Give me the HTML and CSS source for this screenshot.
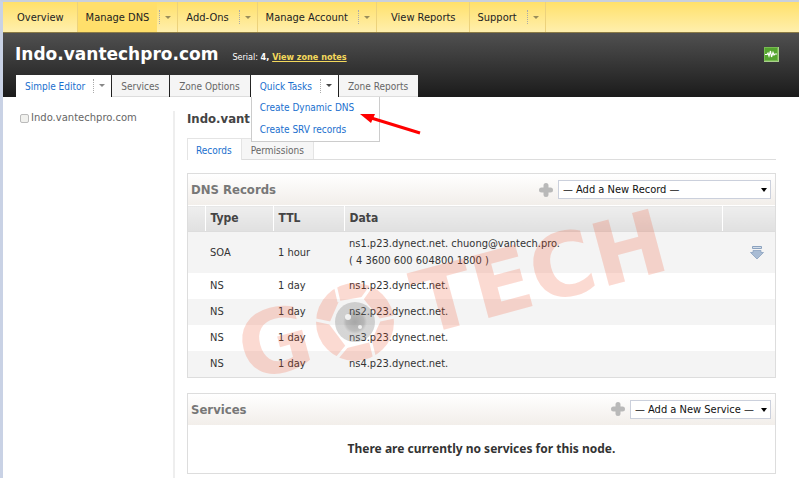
FILE: index.html
```html
<!DOCTYPE html>
<html lang="en">
<head>
	<meta charset="utf-8">
	<meta name="viewport" content="width=device-width">
	<title>Indo.vantechpro.com</title>
	<link rel="stylesheet" href="styles.css">
</head>
<body>

	<nav class="mainnav">
		<div class="navitem single"><a href="#">Overview</a></div>
		<div class="navitem current"><a href="#">Manage DNS</a><button class="more" aria-label="Manage DNS menu"></button></div>
		<div class="navitem"><a href="#">Add-Ons</a><button class="more" aria-label="Add-Ons menu"></button></div>
		<div class="navitem"><a href="#">Manage Account</a><button class="more" aria-label="Manage Account menu"></button></div>
		<div class="navitem single"><a href="#">View Reports</a></div>
		<div class="navitem"><a href="#">Support</a><button class="more" aria-label="Support menu"></button></div>
	</nav>

	<header class="zone">
		<div class="zonetitle">
			<h1>Indo.vantechpro.com</h1>
			<p>Serial: <b>4, <a href="#">View zone notes</a></b></p>
			<svg class="health" width="15" height="15" viewBox="0 0 15 15">
				<rect width="15" height="15" fill="#a9d08c"/>
				<rect x="0.5" y="0.5" width="13" height="13" fill="#55a52f" stroke="#77bb50"/>
				<path d="M1 7.5h2l1-1.5 1 3 1.500-5 1 6 1.500-4.500 1 2.500 1-1h2" fill="none" stroke="#fff" stroke-width="1.200"/>
			</svg>
		</div>
		<div class="zonetabs">
			<div class="zonetab active"><a href="#">Simple Editor</a><button class="more" aria-label="Simple Editor menu"></button></div>
			<div class="zonetab"><a href="#">Services</a></div>
			<div class="zonetab"><a href="#">Zone Options</a></div>
			<div class="zonetab active open">
				<a href="#">Quick Tasks</a><button class="more" aria-label="Quick Tasks menu"></button>
				<div class="taskmenu">
					<a href="#">Create Dynamic DNS</a>
					<a href="#">Create SRV records</a>
					<svg class="pointer" width="64" height="26" viewBox="0 0 64 26">
						<path d="M10 5L62 21" stroke="#f00" stroke-width="3"/>
						<path d="M2 2L17 2L13 11Z" fill="#f00"/>
					</svg>
				</div>
			</div>
			<div class="zonetab"><a href="#">Zone Reports</a></div>
		</div>
	</header>

	<div class="columns">
		<aside class="nodes">
			<label><input type="checkbox">Indo.vantechpro.com</label>
		</aside>

		<main class="node">
			<h2>Indo.vant</h2>
			<div class="nodetabs">
				<a class="nodetab active" href="#">Records</a>
				<a class="nodetab" href="#">Permissions</a>
			</div>

			<section class="panel">
				<div class="panelhead">
					<h3>DNS Records</h3>
					<svg class="plus" width="14" height="14" viewBox="0 0 14 14"><path d="M7 2.500v9M2.500 7h9" stroke="#b9b9b9" stroke-width="5" stroke-linecap="round"/></svg>
					<span class="picker wide"><select aria-label="Add a new record"><option>— Add a New Record —</option></select></span>
				</div>
				<table class="records">
					<thead>
						<tr><th class="mark"></th><th class="type">Type</th><th class="ttl">TTL</th><th>Data</th><th class="action"></th></tr>
					</thead>
					<tbody>
						<tr class="soa">
							<td></td><td>SOA</td><td>1 hour</td>
							<td>ns1.p23.dynect.net. chuong@vantech.pro.<br>( 4 3600 600 604800 1800 )</td>
							<td class="expand">
								<svg width="14" height="15" viewBox="0 0 14 15">
									<path d="M2.500 1.500h9v2h-9z" fill="#d3deea" stroke="#8ba2bf"/>
									<path d="M3 5.500h8v2h2.500L7 14 0.500 7.500H3z" fill="#a9bcd4" stroke="#8ba2bf" stroke-width="0.800"/>
								</svg>
							</td>
						</tr>
						<tr><td></td><td>NS</td><td>1 day</td><td>ns1.p23.dynect.net.</td><td></td></tr>
						<tr><td></td><td>NS</td><td>1 day</td><td>ns2.p23.dynect.net.</td><td></td></tr>
						<tr><td></td><td>NS</td><td>1 day</td><td>ns3.p23.dynect.net.</td><td></td></tr>
						<tr><td></td><td>NS</td><td>1 day</td><td>ns4.p23.dynect.net.</td><td></td></tr>
					</tbody>
				</table>

				<svg class="watermark" width="470" height="200" viewBox="0 0 470 200">
					<defs>
						<mask id="blades">
							<rect x="-50" y="-50" width="100" height="100" fill="#fff"/>
							<path d="M-16 -20L-21 -42M7 -23L20 -41M25 -2L44 -6M15 17L21 42M-8 24L-23 42M-25 1L-44 -3" stroke="#000" stroke-width="3"/>
						</mask>
						<radialGradient id="glass">
							<stop offset="0" stop-color="#333" stop-opacity="0.400"/>
							<stop offset="0.450" stop-color="#444" stop-opacity="0.350"/>
							<stop offset="0.600" stop-color="#777" stop-opacity="0.300"/>
							<stop offset="1" stop-color="#888" stop-opacity="0.350"/>
						</radialGradient>
					</defs>
					<g class="brand" transform="translate(25 172) rotate(-15)">
						<text x="-13" y="1">G</text>
						<text x="168" y="2">TECH</text>
					</g>
					<g transform="translate(120 117)">
						<path class="ring" mask="url(#blades)" fill-rule="evenodd" d="M39 0A39 39 0 1 1 -39 0A39 39 0 1 1 39 0ZM26 -2L7 -25L-16 -21L-26 2L-8 26L16 20Z"/>
						<circle r="20" fill="url(#glass)"/>
						<circle cx="-7" cy="-5" r="3" fill="#fff" opacity="0.800"/>
						<circle cx="5" cy="5" r="2" fill="#fff" opacity="0.800"/>
					</g>
				</svg>
			</section>

			<section class="panel">
				<div class="panelhead">
					<h3>Services</h3>
					<svg class="plus" width="14" height="14" viewBox="0 0 14 14"><path d="M7 2.500v9M2.500 7h9" stroke="#b9b9b9" stroke-width="5" stroke-linecap="round"/></svg>
					<span class="picker"><select aria-label="Add a new service"><option>— Add a New Service —</option></select></span>
				</div>
				<p class="empty">There are currently no services for this node.</p>
			</section>
		</main>
	</div>

</body>
</html>
```
FILE: styles.css
```css
* {
	box-sizing: border-box;
}
html, body {
	margin: 0;
	padding: 0;
}
body {
	min-height: 100vh;
	border-top: 2px solid #c9d0dc;
	border-left: 3px solid #c9d2e5;
	background: #fff;
	color: #333;
	font-family: "DejaVu Sans Condensed", "DejaVu Sans", sans-serif;
	font-stretch: condensed;
	font-size: 11px;
	line-height: 17px;
}
h1, h2, h3, p {
	margin: 0;
}
a {
	color: inherit;
	text-decoration: none;
}

/* Small drop-down arrow beside a tab. */
.more {
	width: 20px;
	padding: 0 0 0 2px;
	border: 0;
	background: none;
	color: #998d5a;
	display: flex;
	align-items: center;
}
.more::before {
	content: "";
	height: 14px;
	margin-right: 5px;
	border-left: 1px dotted #aaa;
}
.more::after {
	content: "";
	border: 3px solid transparent;
	border-top-color: currentColor;
	border-bottom: 0;
}

.mainnav {
	display: flex;
	height: 31px;
	background: linear-gradient(#ffe06a, #ffefad);
	border-bottom: 1px solid #8a7a45;
	color: #222;
}
.navitem {
	display: flex;
	border-right: 1px solid #ecd27c;
}
.navitem a {
	padding: 7px 8px 6px;
}
.navitem.single a {
	padding: 7px 13px 6px 14px;
}
.navitem.current a {
	background: #ffdf6b;
}

.zone {
	display: flex;
	flex-direction: column;
	height: 64px;
	background: linear-gradient(#505050, #1b1b1b);
	color: #fff;
}
.zonetitle {
	flex: 1;
	display: flex;
	align-items: center;
	padding: 0 20px 0 12px;
}
.zonetitle h1 {
	font-family: "DejaVu Sans", sans-serif;
	font-stretch: normal;
	font-size: 17px;
	line-height: 24px;
}
.zonetitle p {
	margin-left: 14px;
	padding-top: 6px;
	font-size: 9px;
}
.zonetitle a {
	color: #f4d95c;
	text-decoration: underline;
}
.health {
	margin-left: auto;
}
.zonetabs {
	display: flex;
	gap: 1px;
	padding-left: 13px;
	font-size: 10px;
}
.zonetab {
	position: relative;
	display: flex;
	height: 22px;
	background: #f5f5f5;
	border-bottom: 1px solid #ddd;
	color: #666;
}
.zonetab a {
	padding: 3px 10px 1px 9px;
}
.zonetab.active {
	background: #fff;
	border-color: #fff;
	color: #1a6fce;
}
.zonetab.active > a {
	padding-right: 6px;
}
.zonetab .more {
	color: #888;
}
.zonetab.open .more {
	color: #444;
}
.taskmenu {
	position: absolute;
	z-index: 2;
	top: 22px;
	left: 0;
	width: 129px;
	height: 45px;
	border: 1px solid #ccc;
	border-top: 0;
	background: #fff;
	display: flex;
	flex-direction: column;
}
.taskmenu a {
	height: 22px;
	padding: 2px 8px;
	white-space: nowrap;
}
.pointer {
	position: absolute;
	top: 15px;
	left: 106px;
}

.columns {
	display: flex;
	align-items: stretch;
	padding: 14px 23px 0 17px;
}
.nodes {
	flex: 0 0 155px;
	min-height: 367px;
	border-right: 2px solid #eee;
	color: #666;
	font-family: "DejaVu Sans", sans-serif;
	font-stretch: normal;
	font-size: 10px;
	line-height: 14px;
}
.nodes label {
	display: flex;
	align-items: center;
	gap: 2px;
}
.nodes input {
	appearance: none;
	width: 9px;
	height: 9px;
	margin: 0;
	border: 1px solid #bbb;
	border-radius: 2px;
	background: #f1f1ee;
}
.node {
	flex: 1;
	min-width: 0;
	padding-left: 12px;
}
.node h2 {
	font-size: 13px;
	line-height: 15px;
	color: #444;
}

.nodetabs {
	display: flex;
	margin: 12px 0 13px;
	height: 22px;
	border-bottom: 1px solid #ddd;
	color: #666;
	font-size: 10px;
}
.nodetab {
	height: 21px;
	padding: 3px 9px;
	border: 1px solid #e4e4e4;
	border-width: 1px 1px 0 0;
	background: #f6f6f6;
}
.nodetab.active {
	height: 22px;
	padding-left: 8px;
	border-left-width: 1px;
	background: #fff;
	color: #1a6fce;
}

.panel {
	position: relative;
	margin-bottom: 15px;
	border: 1px solid #ddd;
}
.panelhead {
	display: flex;
	align-items: center;
	gap: 5px;
	height: 31px;
	padding: 0 4px 0 3px;
	background: linear-gradient(#fff, #f2eeea);
}
.panelhead h3 {
	flex: 1;
	color: #777;
	font-size: 13px;
}
.picker {
	position: relative;
	width: 141px;
}
.picker.wide {
	width: 213px;
}
.picker select {
	appearance: none;
	display: block;
	width: 100%;
	height: 19px;
	padding: 0 4px;
	border: 1px solid #cbd0dc;
	border-radius: 0;
	background: #fff;
	color: #111;
	font: inherit;
}
.picker::after {
	content: "";
	position: absolute;
	top: 8px;
	right: 4px;
	border: 3px solid transparent;
	border-top: 4px solid #000;
	border-bottom: 0;
	pointer-events: none;
}

.records {
	width: 100%;
	border-collapse: collapse;
	table-layout: fixed;
}
.records th, .records td {
	padding: 0 5px;
	text-align: left;
}
.records th {
	height: 26px;
	border-top: 1px solid #fff;
	border-left: 1px solid #fff;
	border-bottom: 1px solid #ddd;
	background: linear-gradient(#eee, #e0e0e0);
	color: #444;
	font-size: 12px;
}
.records .mark {
	width: 17px;
	border-left: 0;
}
.records .type {
	width: 68px;
}
.records .ttl {
	width: 71px;
}
.records .action {
	width: 53px;
}
.records td {
	height: 26px;
}
.records .soa td {
	height: 41px;
}
.records tbody tr:nth-child(odd) {
	background: #f4f4f4;
}
.records .expand {
	padding-right: 11px;
	text-align: right;
}
.records .expand svg {
	vertical-align: middle;
}

.watermark {
	position: absolute;
	top: 31px;
	left: 47px;
	overflow: visible;
	pointer-events: none;
}
.brand text {
	font-family: "DejaVu Sans", sans-serif;
	font-stretch: normal;
	font-size: 88px;
	font-weight: bold;
}
.brand, .ring {
	fill: #f04a23;
	opacity: 0.2;
}

.empty {
	padding: 15px 0 16px;
	font-family: "Noto Sans", sans-serif;
	font-stretch: normal;
	font-size: 12px;
	font-weight: bold;
	text-align: center;
}
```
